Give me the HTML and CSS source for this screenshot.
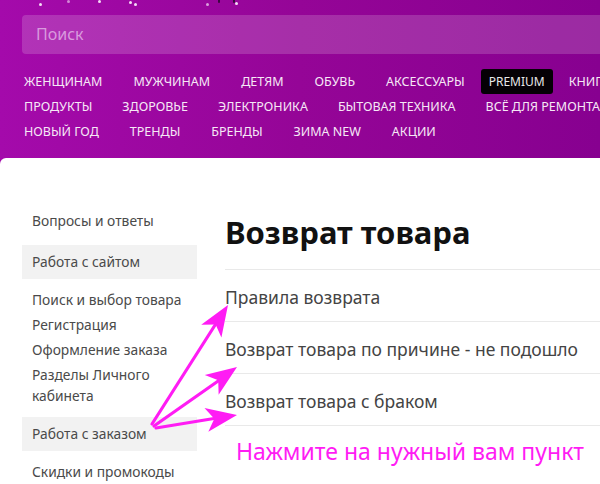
FILE: index.html
```html
<!DOCTYPE html>
<html lang="ru">
<head>
<meta charset="utf-8">
<title>Возврат товара</title>
<link rel="stylesheet" href="styles.css">
</head>
<body>
<div class="screen">
  <header class="top">
    <span class="flake f1"></span><span class="flake f2"></span><span class="flake f3"></span><span class="flake f4"></span><span class="flake f5"></span><span class="flake f6"></span><span class="flake f7"></span>
    <span class="logo-tail t1"></span><span class="logo-tail t2"></span>
    <div class="search">Поиск</div>
    <nav class="menu">
      <div class="menu-row">
        <a class="menu-item">Женщинам</a>
        <a class="menu-item">Мужчинам</a>
        <a class="menu-item">Детям</a>
        <a class="menu-item">Обувь</a>
        <a class="menu-item">Аксессуары</a>
        <a class="menu-item premium">Premium</a>
        <a class="menu-item">Книги</a>
      </div>
      <div class="menu-row tight">
        <a class="menu-item">Продукты</a>
        <a class="menu-item">Здоровье</a>
        <a class="menu-item">Электроника</a>
        <a class="menu-item">Бытовая техника</a>
        <a class="menu-item">Всё для ремонта</a>
      </div>
      <div class="menu-row">
        <a class="menu-item">Новый год</a>
        <a class="menu-item">Тренды</a>
        <a class="menu-item">Бренды</a>
        <a class="menu-item">Зима new</a>
        <a class="menu-item">Акции</a>
      </div>
    </nav>
  </header>
  <div class="sheet">
    <aside class="side">
      <a class="side-link">Вопросы и ответы</a>
      <div class="side-head">Работа с сайтом</div>
      <ul class="side-list">
        <li>Поиск и выбор товара</li>
        <li>Регистрация</li>
        <li>Оформление заказа</li>
        <li>Разделы Личного кабинета</li>
      </ul>
      <div class="side-head">Работа с заказом</div>
      <ul class="side-list">
        <li>Скидки и промокоды</li>
      </ul>
    </aside>
    <main class="content">
      <h1 class="title">Возврат товара</h1>
      <ul class="topics">
        <li>Правила возврата</li>
        <li>Возврат товара по причине - не подошло</li>
        <li>Возврат товара с браком</li>
      </ul>
      <p class="hint">Нажмите на нужный вам пункт</p>
    </main>
  </div>
  <svg class="arrows" width="600" height="484" viewBox="0 0 600 484">
    <g stroke="#ff1cf4" stroke-width="3.2" stroke-linecap="round" fill="none">
      <line x1="152" y1="424" x2="217" y2="322"/>
      <line x1="154" y1="426" x2="221" y2="379"/>
      <line x1="156" y1="428" x2="217" y2="418"/>
    </g>
    <g fill="#ff1cf4">
      <polygon transform="translate(228 305) rotate(-57.4)" points="0,0 -31,-12 -23,0 -31,12"/>
      <polygon transform="translate(237 367) rotate(-35.3)" points="0,0 -31,-12 -23,0 -31,12"/>
      <polygon transform="translate(237 415) rotate(-9.2)" points="0,0 -31,-12 -23,0 -31,12"/>
    </g>
  </svg>
</div>
</body>
</html>
```

FILE: styles.css
```css
* { box-sizing: border-box; }
html, body { margin: 0; padding: 0; }
body {
  width: 600px;
  height: 484px;
  overflow: hidden;
  background: #ffffff;
  font-family: "Noto Sans", "Open Sans", "DejaVu Sans", sans-serif;
}
.screen {
  position: relative;
  width: 600px;
  height: 484px;
  overflow: hidden;
  background: linear-gradient(90deg, #a40aab 0%, #950597 50%, #870090 100%);
}
.top {
  position: relative;
  height: 158px;
  padding: 15px 0 0 22px;
}
.flake {
  position: absolute;
  width: 3px;
  height: 3px;
  border-radius: 50%;
  background: #f4dff6;
}
.f1 { left: 39px; top: 3px; }
.f2 { left: 67px; top: 0px; opacity: .6; }
.f3 { left: 98px; top: 0px; }
.f4 { left: 129px; top: 1px; }
.f5 { left: 134px; top: 3px; }
.f6 { left: 206px; top: 3px; opacity: .7; }
.f7 { left: 235px; top: 2px; }
.logo-tail {
  position: absolute;
  top: 0;
  width: 2px;
  height: 3px;
  background: #3a0a3e;
  border-radius: 0 0 1px 1px;
}
.t1 { left: 218px; }
.t2 { left: 233px; }
.search {
  height: 39px;
  width: 600px;
  border-radius: 4px 0 0 4px;
  background: rgba(255, 255, 255, 0.17);
  color: #d99ade;
  font-size: 16px;
  line-height: 39px;
  padding-left: 14px;
}
.menu {
  display: flex;
  flex-direction: column;
  margin-top: 15px;
  margin-left: -6px;
}
.menu-row {
  display: flex;
  align-items: center;
  gap: 15px;
  height: 25px;
  white-space: nowrap;
}
.menu-row.tight { gap: 14px; }
.menu-item {
  padding: 0 8px;
  font-size: 12.5px;
  line-height: 25px;
  text-transform: uppercase;
  color: #f6e8f6;
}
.menu-item.premium {
  margin: 0 -7px;
  padding: 0 8px;
  font-size: 12px;
  background: #050005;
  border-radius: 3px;
  color: #e8e8e8;
}
.sheet {
  display: flex;
  height: 326px;
  background: #ffffff;
  border-radius: 6px 0 0 0;
}
.side {
  width: 175px;
  margin-left: 22px;
  padding-top: 52px;
  color: #4a4a4a;
  font-size: 13.8px;
}
.side-link {
  display: block;
  padding-left: 10px;
  line-height: 21px;
}
.side-head {
  height: 34px;
  line-height: 34px;
  padding-left: 10px;
  background: #f2f2f2;
}
.side-link + .side-head { margin-top: 14px; }
.side-list {
  list-style: none;
  margin: 0;
  padding: 10px 0 11px 10px;
}
.side-list li {
  line-height: 21px;
  margin-bottom: 4px;
}
.side-list li:last-child { margin-bottom: 0; }
.content {
  flex: 1;
  margin-left: 28px;
  padding-top: 54px;
}
.title {
  margin: 0;
  font-size: 31px;
  line-height: 40px;
  font-weight: 700;
  color: #111111;
}
.topics {
  list-style: none;
  margin: 17px 0 0;
  padding: 0;
  border-top: 1px solid #e9e9e9;
}
.topics li {
  padding: 16px 0 13px;
  line-height: 22px;
  font-size: 17.5px;
  color: #444444;
  border-bottom: 1px solid #e9e9e9;
  white-space: nowrap;
}
.hint {
  margin: 10px 0 0 11px;
  line-height: 30px;
  font-size: 23px;
  color: #ff1cf4;
  white-space: nowrap;
}
.arrows {
  position: absolute;
  left: 0;
  top: 0;
  pointer-events: none;
}
```
